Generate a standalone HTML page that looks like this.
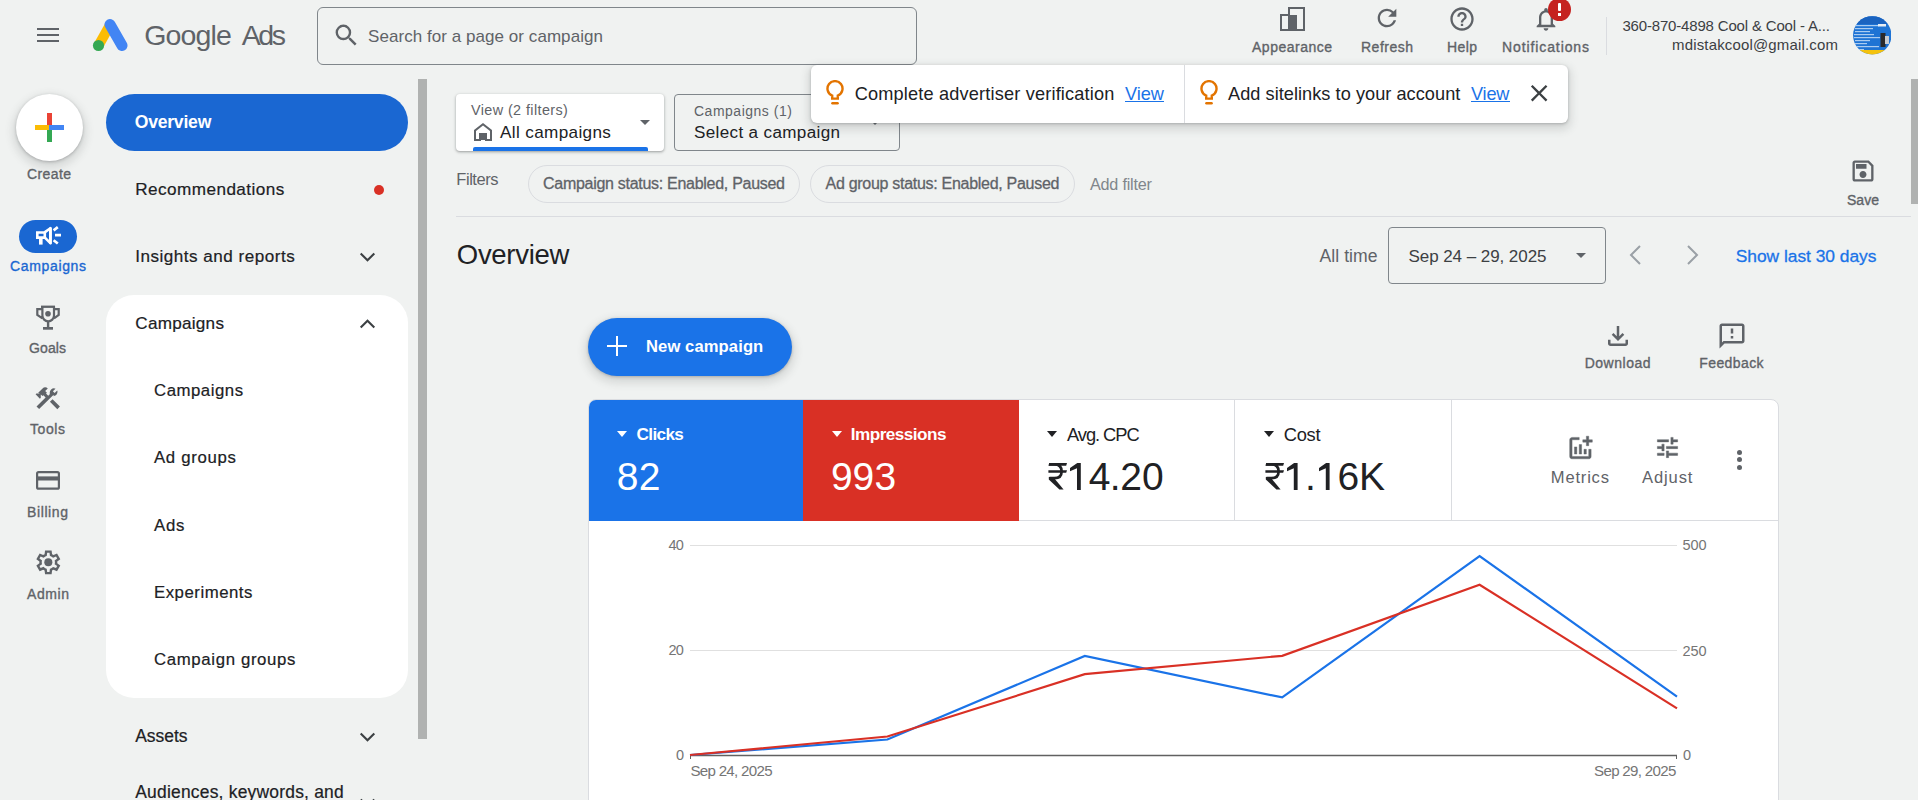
<!DOCTYPE html>
<html><head><meta charset="utf-8">
<style>
*{box-sizing:border-box;margin:0;padding:0}
html,body{width:1918px;height:800px;overflow:hidden;background:#f0f2f1;font-family:"Liberation Sans",sans-serif;color:#202124}
.a{position:absolute;white-space:nowrap;line-height:1}
svg{display:block;position:absolute}
</style></head><body>
<div class="a" style="left:37px;top:28px;width:22px;height:2px;background:#5f6368"></div>
<div class="a" style="left:37px;top:34px;width:22px;height:2px;background:#5f6368"></div>
<div class="a" style="left:37px;top:40px;width:22px;height:2px;background:#5f6368"></div>
<svg style="left:90px;top:17px" width="40" height="38" viewBox="0 0 40 38">
<line x1="8.5" y1="28.5" x2="20" y2="8" stroke="#fbbc04" stroke-width="10"/>
<line x1="20" y1="7.5" x2="32" y2="28.5" stroke="#4285f4" stroke-width="11" stroke-linecap="round"/>
<circle cx="8.5" cy="28.5" r="5.6" fill="#34a853"/></svg>
<div class="a" style="left:144.30px;top:21.00px;font-size:28.50px;letter-spacing:-0.882px;color:#5f6368;">Google</div>
<div class="a" style="left:241.80px;top:21.00px;font-size:28.50px;letter-spacing:-2.446px;color:#5f6368;">Ads</div>
<div class="a" style="left:317px;top:7px;width:600px;height:58px;border:1px solid #80868b;border-radius:6px"></div>
<svg style="left:332.4px;top:21.4px" width="28.8" height="28.8" viewBox="0 0 24 24"><path fill="#5f6368" d="M15.5 14h-.79l-.28-.27A6.47 6.47 0 0 0 16 9.5 6.5 6.5 0 1 0 9.5 16c1.61 0 3.09-.59 4.23-1.57l.27.28v.79l5 4.99L20.49 19l-4.99-5zm-6 0C7.01 14 5 11.99 5 9.5S7.01 5 9.5 5 14 7.01 14 9.5 11.99 14 9.5 14z"/></svg>
<div class="a" style="left:368.00px;top:28.00px;font-size:17.01px;letter-spacing:0.054px;color:#5f6368;">Search for a page or campaign</div>
<svg style="left:1278px;top:5px" width="29" height="27" viewBox="0 0 29 27">
<rect x="11" y="3" width="15" height="22" fill="none" stroke="#5f6368" stroke-width="2"/>
<rect x="3" y="10" width="8" height="15" fill="none" stroke="#5f6368" stroke-width="2"/>
<rect x="10" y="10" width="9" height="15" fill="#5f6368"/></svg>
<div class="a" style="left:1252.00px;top:40.00px;font-size:14.00px;letter-spacing:0.501px;color:#5f6368;-webkit-text-stroke:0.35px #5f6368;">Appearance</div>
<svg style="left:1373px;top:4px" width="28" height="28" viewBox="0 0 24 24"><path fill="#5f6368" d="M17.65 6.35A7.958 7.958 0 0 0 12 4c-4.42 0-7.99 3.58-7.99 8s3.57 8 7.99 8c3.73 0 6.84-2.55 7.73-6h-2.08A5.99 5.99 0 0 1 12 18c-3.31 0-6-2.69-6-6s2.69-6 6-6c1.66 0 3.14.69 4.22 1.78L13 11h7V4l-2.35 2.35z"/></svg>
<div class="a" style="left:1361.00px;top:40.00px;font-size:14.00px;letter-spacing:0.494px;color:#5f6368;-webkit-text-stroke:0.35px #5f6368;">Refresh</div>
<svg style="left:1448px;top:5px" width="28" height="28" viewBox="0 0 24 24"><path fill="#5f6368" d="M11 18h2v-2h-2v2zm1-16C6.48 2 2 6.48 2 12s4.48 10 10 10 10-4.48 10-10S17.52 2 12 2zm0 18c-4.41 0-8-3.59-8-8s3.59-8 8-8 8 3.59 8 8-3.59 8-8 8zm0-14c-2.21 0-4 1.79-4 4h2c0-1.1.9-2 2-2s2 .9 2 2c0 2-3 1.75-3 5h2c0-2.25 3-2.5 3-5 0-2.21-1.79-4-4-4z"/></svg>
<div class="a" style="left:1447.00px;top:40.00px;font-size:14.00px;letter-spacing:0.398px;color:#5f6368;-webkit-text-stroke:0.35px #5f6368;">Help</div>
<svg style="left:1532px;top:5px" width="28" height="28" viewBox="0 0 24 24"><path fill="#5f6368" d="M12 22c1.1 0 2-.9 2-2h-4c0 1.1.89 2 2 2zm6-6v-5c0-3.07-1.64-5.64-4.5-6.32V4c0-.83-.67-1.5-1.5-1.5s-1.5.67-1.5 1.5v.68C7.63 5.36 6 7.92 6 11v5l-2 2v1h16v-1l-2-2zm-2 1H8v-6c0-2.48 1.51-4.5 4-4.5s4 2.02 4 4.5v6z"/></svg>
<div class="a" style="left:1548px;top:-2px;width:23px;height:23px;border-radius:50%;background:#c5221f"></div>
<div class="a" style="left:1557.5px;top:3px;width:3px;height:8px;background:#fff;border-radius:1px"></div>
<div class="a" style="left:1557.5px;top:13px;width:3px;height:3px;background:#fff"></div>
<div class="a" style="left:1502.00px;top:40.00px;font-size:14.00px;letter-spacing:0.895px;color:#5f6368;-webkit-text-stroke:0.35px #5f6368;">Notifications</div>
<div class="a" style="left:1606px;top:17px;width:1px;height:38px;background:#dadce0"></div>
<div class="a" style="left:1622.40px;top:19.00px;font-size:14.97px;letter-spacing:-0.154px;color:#3c4043;">360-870-4898 Cool &amp; Cool - A...</div>
<div class="a" style="left:1672.00px;top:38.00px;font-size:14.97px;letter-spacing:0.176px;color:#3c4043;">mdistakcool@gmail.com</div>
<svg style="left:1852.7px;top:16.2px" width="38.5" height="38.7" viewBox="0 0 38.5 38.7"><defs><clipPath id="av"><circle cx="19.25" cy="19.35" r="19.2"/></clipPath></defs><g clip-path="url(#av)"><rect width="38.5" height="38.7" fill="#1f74d4"/><rect x="0" y="0" width="38.5" height="8" fill="#1a63c0"/><g fill="#cfe3f7" opacity="0.8"><rect x="2" y="9" width="24" height="1.2"/><rect x="2" y="12" width="18" height="1.2"/><rect x="2" y="15" width="15" height="1.2"/><rect x="1" y="18" width="20" height="1.2"/><rect x="1" y="21" width="26" height="1.2"/><rect x="2" y="24" width="15" height="1.2"/><rect x="2" y="27" width="12" height="1.2"/><rect x="2" y="30" width="24" height="1.2"/><rect x="3" y="33" width="8" height="1.2"/></g><rect x="25" y="8" width="8" height="2.5" fill="#e8eef4"/><rect x="27.5" y="17" width="5" height="14" fill="#2a2a2a"/><rect x="32" y="20" width="4" height="8" fill="#c8ccd0"/><rect x="0" y="34" width="38.5" height="5" fill="#f4c20d"/></g></svg>
<div class="a" style="left:16px;top:94px;width:67px;height:67px;border-radius:50%;background:#fff;box-shadow:0 1px 3px rgba(60,64,67,.3),0 4px 8px 3px rgba(60,64,67,.15)"></div>
<div class="a" style="left:47px;top:113px;width:5px;height:14px;background:#ea4335"></div>
<div class="a" style="left:35px;top:125px;width:14px;height:5px;background:#fbbc04"></div>
<div class="a" style="left:49px;top:125px;width:15px;height:5px;background:#4285f4"></div>
<div class="a" style="left:47px;top:130px;width:5px;height:12px;background:#34a853"></div>
<div class="a" style="left:27.00px;top:167.00px;font-size:14.00px;letter-spacing:0.393px;color:#5f6368;-webkit-text-stroke:0.35px #5f6368;">Create</div>
<div class="a" style="left:19px;top:220px;width:58px;height:33px;border-radius:17px;background:#1a67d2"></div>
<svg style="left:36px;top:226px" width="26" height="20" viewBox="0 0 26 20"><path d="M1.3 6.5H8.8V11.6H1.3Z" fill="none" stroke="#fff" stroke-width="2.6"/><rect x="3" y="11" width="3.6" height="7.6" fill="#fff"/><path d="M8.6 6.4L14.4 2.2V17.2L8.6 11.4" fill="none" stroke="#fff" stroke-width="2.6" stroke-linejoin="round"/><rect x="13" y="1.2" width="2.8" height="17" rx="1.2" fill="#fff"/><path d="M17.6 4.3L21.8 1.2M19 9.1H25M17.6 14.2L21.8 17.5" stroke="#fff" stroke-width="2.7"/></svg>
<div class="a" style="left:10.00px;top:259.00px;font-size:14.00px;letter-spacing:0.649px;color:#1a67d2;-webkit-text-stroke:0.35px #1a67d2;">Campaigns</div>
<svg style="left:36px;top:305px" width="24" height="25" viewBox="0 0 24 25"><rect x="5" y="0.6" width="14" height="2.3" fill="#5f6368"/><path d="M6.4 1.5V10.5A5.8 5.8 0 0 0 18 10.5V1.5M6.4 4.1H1.3V10L6.4 13.3M18 4.1H22.7V10L18 13.3" fill="none" stroke="#5f6368" stroke-width="2.2"/><rect x="10.9" y="16" width="2.4" height="6.5" fill="#5f6368"/><rect x="7" y="22" width="10" height="2.7" fill="#5f6368"/><circle cx="12" cy="8.7" r="2.8" fill="#5f6368"/></svg>
<div class="a" style="left:29.00px;top:341.00px;font-size:14.00px;letter-spacing:0.106px;color:#5f6368;-webkit-text-stroke:0.35px #5f6368;">Goals</div>
<svg style="left:32.8px;top:382.8px" width="29.5" height="29.5" viewBox="0 0 24 24"><path fill="#5f6368" d="M13.78 15.3l6 6 2.11-2.16-6-6-2.11 2.16zm3.72-5.2c-.39 0-.81-.05-1.14-.19L4.97 21.25l-2.11-2.11 7.41-7.4L8.5 9.96l-.72.71-1.45-1.41v2.82l-.7.71-3.52-3.54.71-.71h2.8L4.23 7.95l3.56-3.56c1.17-1.17 3.07-1.17 4.24 0L9.91 6.51l1.41 1.41-.71.71 1.78 1.78 1.41-1.41c-.14-.33-.2-.75-.2-1.14a3.49 3.49 0 0 1 3.9-3.48c.3.03.55.1.8.21l-2.12 2.12 1.41 1.41 2.12-2.12c.11.25.17.52.21.8a3.49 3.49 0 0 1-3.48 3.9z"/></svg>
<div class="a" style="left:30.00px;top:422.00px;font-size:14.00px;letter-spacing:0.577px;color:#5f6368;-webkit-text-stroke:0.35px #5f6368;">Tools</div>
<svg style="left:36px;top:471px" width="25" height="20" viewBox="0 0 25 20"><rect x="1.1" y="1.1" width="21.8" height="16.6" rx="1.5" fill="none" stroke="#5f6368" stroke-width="2.2"/><rect x="1" y="5.4" width="22" height="4.1" fill="#5f6368"/></svg>
<div class="a" style="left:27.00px;top:505.00px;font-size:14.00px;letter-spacing:0.609px;color:#5f6368;-webkit-text-stroke:0.35px #5f6368;">Billing</div>
<svg style="left:33.8px;top:547.6px" width="28.66" height="28.66" viewBox="0 -960 960 960"><path fill="#5f6368" d="m370-80-16-128q-13-5-24.5-12T307-235l-119 50L78-375l103-78q-1-7-1-13.5v-27q0-6.5 1-13.5L78-585l110-190 119 50q11-8 23-15t24-12l16-128h220l16 128q13 5 24.5 12t22.5 15l119-50 110 190-103 78q1 7 1 13.5v27q0 6.5-2 13.5l103 78-110 190-118-50q-11 8-23 15t-24 12L590-80H370Zm70-80h79l14-106q31-8 57.5-23.5T639-327l99 41 39-68-86-65q5-14 7-29.5t2-31.5q0-16-2-31.5t-7-29.5l86-65-39-68-99 42q-22-23-48.5-38.5T533-694l-13-106h-79l-14 106q-31 8-57.5 23.5T321-633l-99-41-39 68 86 64q-5 15-7 30t-2 32q0 16 2 31t7 30l-86 65 39 68 99-42q22 23 48.5 38.5T427-266l13 106Z"/><circle cx="480" cy="-480" r="135" fill="#5f6368"/></svg>
<div class="a" style="left:27.00px;top:587.00px;font-size:14.00px;letter-spacing:0.577px;color:#5f6368;-webkit-text-stroke:0.35px #5f6368;">Admin</div>
<div class="a" style="left:106px;top:94px;width:302px;height:57px;border-radius:28.5px;background:#1a67d2"></div>
<div class="a" style="left:134.70px;top:114.00px;font-size:17.59px;letter-spacing:-0.223px;color:#fff;font-weight:bold;">Overview</div>
<div class="a" style="left:135.25px;top:181.00px;font-size:17.15px;letter-spacing:0.439px;color:#202124;-webkit-text-stroke:0.2px #202124;">Recommendations</div>
<div class="a" style="left:374px;top:185px;width:10px;height:10px;border-radius:50%;background:#d93025"></div>
<div class="a" style="left:135.25px;top:248.00px;font-size:17.08px;letter-spacing:0.500px;color:#202124;-webkit-text-stroke:0.2px #202124;">Insights and reports</div>
<svg style="left:358.5px;top:252px" width="18" height="12" viewBox="0 0 18 12"><path fill="none" stroke="#3c4043" stroke-width="2.1" d="M1.7 1.5L8.5 8.3L15.3 1.5"/></svg>
<div class="a" style="left:106px;top:295px;width:302px;height:403px;border-radius:28px;background:#fff"></div>
<div class="a" style="left:135.25px;top:315.00px;font-size:17.15px;letter-spacing:0.251px;color:#202124;-webkit-text-stroke:0.2px #202124;">Campaigns</div>
<svg style="left:358.5px;top:319px" width="18" height="12" viewBox="0 0 18 12"><path fill="none" stroke="#3c4043" stroke-width="2.1" d="M1.7 8.5L8.5 1.7L15.3 8.5"/></svg>
<div class="a" style="left:154.00px;top:383.00px;font-size:16.80px;letter-spacing:0.517px;color:#202124;-webkit-text-stroke:0.2px #202124;">Campaigns</div>
<div class="a" style="left:154.00px;top:450.00px;font-size:16.80px;letter-spacing:0.679px;color:#202124;-webkit-text-stroke:0.2px #202124;">Ad groups</div>
<div class="a" style="left:154.00px;top:518.00px;font-size:16.80px;letter-spacing:0.781px;color:#202124;-webkit-text-stroke:0.2px #202124;">Ads</div>
<div class="a" style="left:154.00px;top:585.00px;font-size:16.80px;letter-spacing:0.513px;color:#202124;-webkit-text-stroke:0.2px #202124;">Experiments</div>
<div class="a" style="left:154.00px;top:652.00px;font-size:16.80px;letter-spacing:0.640px;color:#202124;-webkit-text-stroke:0.2px #202124;">Campaign groups</div>
<div class="a" style="left:135.25px;top:728.00px;font-size:17.44px;letter-spacing:-0.015px;color:#202124;-webkit-text-stroke:0.2px #202124;">Assets</div>
<svg style="left:358.5px;top:732px" width="18" height="12" viewBox="0 0 18 12"><path fill="none" stroke="#3c4043" stroke-width="2.1" d="M1.7 1.5L8.5 8.3L15.3 1.5"/></svg>
<div class="a" style="left:135.25px;top:784.00px;font-size:17.44px;letter-spacing:0.213px;color:#202124;-webkit-text-stroke:0.2px #202124;">Audiences, keywords, and</div>
<svg style="left:358.5px;top:798px" width="18" height="12" viewBox="0 0 18 12"><path fill="none" stroke="#3c4043" stroke-width="2.1" d="M1.7 1.5L8.5 8.3L15.3 1.5"/></svg>
<div class="a" style="left:418px;top:79px;width:9px;height:660px;background:#b0b2b1"></div>
<div class="a" style="left:456px;top:94px;width:208px;height:57px;border-radius:4px;background:#fff;box-shadow:0 1px 2px rgba(60,64,67,.3),0 1px 3px 1px rgba(60,64,67,.15)"></div>
<div class="a" style="left:471.00px;top:103.00px;font-size:14.39px;letter-spacing:0.406px;color:#5f6368;">View (2 filters)</div>
<svg style="left:471px;top:120px" width="24" height="24" viewBox="0 0 24 24"><path fill="#5f6368" d="M12 3L3 10v11h7v-6h4v6h7V10z"/><path fill="#fff" d="M12 5.5l7 5.4V19h-3v-6H8v6H5v-8.1z"/><rect x="9.5" y="15" width="5" height="5" fill="#5f6368"/></svg>
<div class="a" style="left:500.00px;top:124.00px;font-size:17.15px;letter-spacing:0.353px;color:#202124;">All campaigns</div>
<svg style="left:633px;top:110px" width="24" height="24" viewBox="0 0 24 24"><path fill="#5f6368" d="M7 10l5 5 5-5z"/></svg>
<div class="a" style="left:473px;top:147px;width:175px;height:4px;border-radius:2px 2px 0 0;background:#1a73e8"></div>
<div class="a" style="left:674px;top:94px;width:226px;height:57px;border-radius:4px;border:1px solid #80868b"></div>
<div class="a" style="left:694.00px;top:105.00px;font-size:13.95px;letter-spacing:0.542px;color:#5f6368;">Campaigns (1)</div>
<div class="a" style="left:694.00px;top:124.00px;font-size:17.08px;letter-spacing:0.343px;color:#202124;">Select a campaign</div>
<div class="a" style="left:869px;top:119px;width:0;height:0;border-left:6px solid transparent;border-right:6px solid transparent;border-top:6px solid #5f6368"></div>
<div class="a" style="left:811px;top:65px;width:757px;height:58px;border-radius:6px;background:#fff;box-shadow:0 1px 3px rgba(60,64,67,.3),0 4px 8px 3px rgba(60,64,67,.15)"></div>
<svg style="left:823.2px;top:80px" width="24" height="26" viewBox="0 0 24 26"><path fill="none" stroke="#e37400" stroke-width="2.4" d="M9.2 18.6V15.6A7.5 7.5 0 1 1 14.8 15.6V18.6Z"/><rect x="8.2" y="22" width="7.6" height="2.5" rx="1.2" fill="#e37400"/></svg>
<div class="a" style="left:854.70px;top:85.00px;font-size:18.17px;letter-spacing:0.174px;color:#202124;">Complete advertiser verification</div>
<div class="a" style="left:1125.00px;top:85.00px;font-size:18.17px;letter-spacing:-0.036px;color:#1a73e8;">View</div>
<div class="a" style="left:1125px;top:101px;width:39px;height:1px;background:#1a73e8"></div>
<div class="a" style="left:1184px;top:65px;width:1px;height:58px;background:#dadce0"></div>
<svg style="left:1196.7px;top:80px" width="24" height="26" viewBox="0 0 24 26"><path fill="none" stroke="#e37400" stroke-width="2.4" d="M9.2 18.6V15.6A7.5 7.5 0 1 1 14.8 15.6V18.6Z"/><rect x="8.2" y="22" width="7.6" height="2.5" rx="1.2" fill="#e37400"/></svg>
<div class="a" style="left:1228.00px;top:85.00px;font-size:18.17px;letter-spacing:0.043px;color:#202124;">Add sitelinks to your account</div>
<div class="a" style="left:1471.00px;top:85.00px;font-size:18.17px;letter-spacing:-0.203px;color:#1a73e8;">View</div>
<div class="a" style="left:1471px;top:101px;width:39px;height:1px;background:#1a73e8"></div>
<svg style="left:1525px;top:79px" width="28.3" height="28.3" viewBox="0 0 24 24"><path fill="#3c4043" d="M19 6.41L17.59 5 12 10.59 6.41 5 5 6.41 10.59 12 5 17.59 6.41 19 12 13.41 17.59 19 19 17.59 13.41 12z"/></svg>
<div class="a" style="left:456.30px;top:171.00px;font-size:16.50px;letter-spacing:-0.454px;color:#5f6368;">Filters</div>
<div class="a" style="left:528px;top:165px;width:272px;height:38px;border-radius:19px;border:1px solid #dadce0"></div>
<div class="a" style="left:543.00px;top:176.00px;font-size:16.00px;letter-spacing:-0.285px;color:#5f6368;-webkit-text-stroke:0.3px #5f6368;">Campaign status: Enabled, Paused</div>
<div class="a" style="left:810px;top:165px;width:265px;height:38px;border-radius:19px;border:1px solid #dadce0"></div>
<div class="a" style="left:825.50px;top:176.00px;font-size:16.00px;letter-spacing:-0.288px;color:#5f6368;-webkit-text-stroke:0.3px #5f6368;">Ad group status: Enabled, Paused</div>
<div class="a" style="left:1090.00px;top:176.00px;font-size:16.20px;letter-spacing:-0.217px;color:#80868b;">Add filter</div>
<svg style="left:1849px;top:157px" width="28" height="28" viewBox="0 0 24 24"><path fill="#5f6368" d="M17 3H5c-1.11 0-2 .9-2 2v14c0 1.1.89 2 2 2h14c1.1 0 2-.9 2-2V7l-4-4zm2 16H5V5h11.17L19 7.83V19zm-7-7c-1.66 0-3 1.34-3 3s1.34 3 3 3 3-1.34 3-3-1.34-3-3-3zM6 6h9v4H6z"/></svg>
<div class="a" style="left:1847.00px;top:193.00px;font-size:14.00px;letter-spacing:0.027px;color:#5f6368;-webkit-text-stroke:0.35px #5f6368;">Save</div>
<div class="a" style="left:456px;top:216px;width:1455px;height:1px;background:#dadce0"></div>
<div class="a" style="left:1911px;top:79px;width:7px;height:125px;background:#b0b2b1"></div>
<div class="a" style="left:456.80px;top:241.00px;font-size:27.50px;letter-spacing:-0.296px;color:#202124;">Overview</div>
<div class="a" style="left:1319.40px;top:248.00px;font-size:17.60px;letter-spacing:0.074px;color:#5f6368;">All time</div>
<div class="a" style="left:1388px;top:227px;width:218px;height:57px;border-radius:4px;border:1px solid #80868b"></div>
<div class="a" style="left:1408.50px;top:248.00px;font-size:17.00px;letter-spacing:-0.061px;color:#3c4043;">Sep 24 – 29, 2025</div>
<svg style="left:1569px;top:243px" width="24" height="24" viewBox="0 0 24 24"><path fill="#5f6368" d="M7 10l5 5 5-5z"/></svg>
<svg style="left:1626px;top:244px" width="18" height="22" viewBox="0 0 18 22"><path fill="none" stroke="#9aa0a6" stroke-width="2" d="M14 2L5 11L14 20"/></svg>
<svg style="left:1684px;top:244px" width="18" height="22" viewBox="0 0 18 22"><path fill="none" stroke="#9aa0a6" stroke-width="2" d="M4 2L13 11L4 20"/></svg>
<div class="a" style="left:1735.70px;top:248.00px;font-size:17.40px;letter-spacing:-0.025px;color:#1a73e8;-webkit-text-stroke:0.3px #1a73e8;">Show last 30 days</div>
<div class="a" style="left:588px;top:318px;width:204px;height:58px;border-radius:29px;background:#1a73e8;box-shadow:0 1px 3px rgba(60,64,67,.3),0 4px 8px 3px rgba(60,64,67,.15)"></div>
<div class="a" style="left:607px;top:344.75px;width:20px;height:2.5px;background:#fff"></div>
<div class="a" style="left:615.75px;top:336px;width:2.5px;height:20px;background:#fff"></div>
<div class="a" style="left:646.00px;top:339.00px;font-size:16.60px;letter-spacing:0.096px;color:#fff;font-weight:bold;">New campaign</div>
<svg style="left:1603px;top:321px" width="30" height="30" viewBox="0 -960 960 960"><path fill="#5f6368" d="M480-320 280-520l56-58 104 104v-326h80v326l104-104 56 58-200 200ZM240-160q-33 0-56.5-23.5T160-240v-120h80v120h480v-120h80v120q0 33-23.5 56.5T720-160H240Z"/></svg>
<div class="a" style="left:1584.70px;top:356.00px;font-size:14.00px;letter-spacing:0.519px;color:#5f6368;-webkit-text-stroke:0.35px #5f6368;">Download</div>
<svg style="left:1717px;top:321px" width="30" height="30" viewBox="0 0 24 24"><path fill="#5f6368" d="M20 2H4c-1.1 0-1.99.9-1.99 2L2 22l4-4h14c1.1 0 2-.9 2-2V4c0-1.1-.9-2-2-2zm0 14H5.17l-.59.59-.58.58V4h16v12zm-9-4h2v2h-2zm0-6h2v4h-2z"/></svg>
<div class="a" style="left:1699.30px;top:356.00px;font-size:14.00px;letter-spacing:0.396px;color:#5f6368;-webkit-text-stroke:0.35px #5f6368;">Feedback</div>
<div class="a" style="left:588px;top:399px;width:1191px;height:420px;border-radius:8px 8px 0 0;background:#fff;border:1px solid #dadce0"></div>
<div class="a" style="left:589px;top:400px;width:214px;height:121px;border-radius:7px 0 0 0;background:#1a73e8"></div>
<div class="a" style="left:803px;top:400px;width:216px;height:121px;background:#d93025"></div>
<div class="a" style="left:1234px;top:400px;width:1px;height:121px;background:#dadce0"></div>
<div class="a" style="left:1451px;top:400px;width:1px;height:121px;background:#dadce0"></div>
<div class="a" style="left:1019px;top:520px;width:759px;height:1px;background:#dadce0"></div>
<div class="a" style="left:616.8px;top:431px;width:0;height:0;border-left:5.7px solid transparent;border-right:5.7px solid transparent;border-top:6px solid #fff"></div>
<div class="a" style="left:636.60px;top:426.00px;font-size:17.15px;letter-spacing:-0.651px;color:#fff;font-weight:bold;">Clicks</div>
<div class="a" style="left:616.80px;top:457px;font-size:39.00px;color:#fff;">8</div>
<div class="a" style="left:638.68px;top:457px;font-size:39.00px;color:#fff;">2</div>
<div class="a" style="left:831.5px;top:431px;width:0;height:0;border-left:5.7px solid transparent;border-right:5.7px solid transparent;border-top:6px solid #fff"></div>
<div class="a" style="left:850.80px;top:426.00px;font-size:17.15px;letter-spacing:-0.536px;color:#fff;font-weight:bold;">Impressions</div>
<div class="a" style="left:830.93px;top:457px;font-size:39.00px;color:#fff;">9</div>
<div class="a" style="left:852.43px;top:457px;font-size:39.00px;color:#fff;">9</div>
<div class="a" style="left:874.43px;top:457px;font-size:39.00px;color:#fff;">3</div>
<div class="a" style="left:1047px;top:431px;width:0;height:0;border-left:5.7px solid transparent;border-right:5.7px solid transparent;border-top:6px solid #202124"></div>
<div class="a" style="left:1067.00px;top:426.00px;font-size:18.31px;letter-spacing:-1.054px;color:#202124;">Avg. CPC</div>
<div class="a" style="left:1263.8px;top:431px;width:0;height:0;border-left:5.7px solid transparent;border-right:5.7px solid transparent;border-top:6px solid #202124"></div>
<div class="a" style="left:1283.80px;top:426.00px;font-size:18.31px;letter-spacing:-0.312px;color:#202124;">Cost</div>
<svg style="left:1047.5px;top:462px" width="20" height="29" viewBox="0 0 20 29"><path fill="#202124" d="M1.2 1H19L18.2 3.75H0.4Z M0.4 8.25H19L18.2 10.75H0.4Z"/><path fill="none" stroke="#202124" stroke-width="2.7" d="M1 2.4H6.5C11 2.4 13.6 5 13.6 9.5C13.6 13.8 11 16.2 6.5 16.2H1.5"/><path fill="#202124" d="M0.8 15H5.2L15.6 27.5H11.4L0.8 17.5Z"/></svg>
<svg style="left:1070.20px;top:463.00px" width="11.80" height="27.00" viewBox="0 0 11.80 27.00"><path fill="#202124" d="M7.00 27.00V5.2L0 8.3V4.9L7.30 0H10.80V27.00Z"/></svg>
<div class="a" style="left:1088.63px;top:457px;font-size:39.00px;color:#202124;">4</div>
<div class="a" style="left:1109.64px;top:457px;font-size:39.00px;color:#202124;">.</div>
<div class="a" style="left:1120.13px;top:457px;font-size:39.00px;color:#202124;">2</div>
<div class="a" style="left:1141.88px;top:457px;font-size:39.00px;color:#202124;">0</div>
<svg style="left:1264.8px;top:462px" width="20" height="29" viewBox="0 0 20 29"><path fill="#202124" d="M1.2 1H19L18.2 3.75H0.4Z M0.4 8.25H19L18.2 10.75H0.4Z"/><path fill="none" stroke="#202124" stroke-width="2.7" d="M1 2.4H6.5C11 2.4 13.6 5 13.6 9.5C13.6 13.8 11 16.2 6.5 16.2H1.5"/><path fill="#202124" d="M0.8 15H5.2L15.6 27.5H11.4L0.8 17.5Z"/></svg>
<svg style="left:1287.10px;top:463.00px" width="11.60" height="27.00" viewBox="0 0 11.60 27.00"><path fill="#202124" d="M6.80 27.00V5.2L0 8.3V4.9L7.10 0H10.60V27.00Z"/></svg>
<div class="a" style="left:1305.09px;top:457px;font-size:39.00px;color:#202124;">.</div>
<svg style="left:1318.90px;top:463.00px" width="11.60" height="27.00" viewBox="0 0 11.60 27.00"><path fill="#202124" d="M6.80 27.00V5.2L0 8.3V4.9L7.10 0H10.60V27.00Z"/></svg>
<div class="a" style="left:1337.53px;top:457px;font-size:39.00px;color:#202124;">6</div>
<div class="a" style="left:1358.98px;top:457px;font-size:39.00px;color:#202124;">K</div>
<svg style="left:1567px;top:435px" width="28" height="25" viewBox="2 1 21 21"><path fill="#5f6368" stroke="#5f6368" stroke-width="0.35" d="M22 5v2h-3v3h-2V7h-3V5h3V2h2v3h3zm-3 14H5V5h6V3H5c-1.1 0-2 .9-2 2v14c0 1.1.9 2 2 2h14c1.1 0 2-.9 2-2v-6h-2v6zm-4-6v4h2v-4h-2zm-4 4h2V9h-2v8zm-2 0v-6H7v6h2z"/></svg>
<div class="a" style="left:1550.80px;top:470.00px;font-size:16.57px;letter-spacing:0.801px;color:#5f6368;">Metrics</div>
<svg style="left:1653.5px;top:433.5px" width="27" height="27" viewBox="0 0 24 24"><path fill="#5f6368" stroke="#5f6368" stroke-width="0.4" d="M3 17v2h6v-2H3zM3 5v2h10V5H3zm10 16v-2h8v-2h-8v-2h-2v6h2zM7 9v2H3v2h4v2h2V9H7zm14 4v-2H11v2h10zm-6-4h2V7h4V5h-4V3h-2v6z"/></svg>
<div class="a" style="left:1642.00px;top:470.00px;font-size:16.57px;letter-spacing:0.887px;color:#5f6368;">Adjust</div>
<div class="a" style="left:1737px;top:449.5px;width:5px;height:5px;border-radius:50%;background:#5f6368"></div>
<div class="a" style="left:1737px;top:457.0px;width:5px;height:5px;border-radius:50%;background:#5f6368"></div>
<div class="a" style="left:1737px;top:464.5px;width:5px;height:5px;border-radius:50%;background:#5f6368"></div>
<svg style="left:0;top:0" width="1918" height="800">
<line x1="690" y1="545.5" x2="1677" y2="545.5" stroke="#e0e0e0" stroke-width="1"/>
<line x1="690" y1="650.5" x2="1677" y2="650.5" stroke="#e0e0e0" stroke-width="1"/>
<line x1="690" y1="755.5" x2="1677" y2="755.5" stroke="#616161" stroke-width="1.5"/>
<line x1="690.5" y1="755" x2="690.5" y2="759" stroke="#616161" stroke-width="1"/>
<line x1="1676.5" y1="755" x2="1676.5" y2="759" stroke="#616161" stroke-width="1"/>
<polyline points="690.0,755.0 887.4,739.5 1084.8,656.0 1282.2,697.4 1479.6,556.0 1677.0,696.7" fill="none" stroke="#1a73e8" stroke-width="2.2" stroke-linejoin="miter"/>
<polyline points="690.0,755.0 887.4,736.5 1084.8,674.2 1282.2,655.8 1479.6,584.7 1677.0,708.4" fill="none" stroke="#d93025" stroke-width="2.2" stroke-linejoin="miter"/>
</svg>
<div class="a" style="left:668.60px;top:538.00px;font-size:14.53px;letter-spacing:-0.870px;color:#757575;">40</div>
<div class="a" style="left:668.60px;top:643.00px;font-size:14.53px;letter-spacing:-0.870px;color:#757575;">20</div>
<div class="a" style="left:676.00px;top:748.00px;font-size:14.53px;letter-spacing:0.000px;color:#757575;">0</div>
<div class="a" style="left:1682.60px;top:538.00px;font-size:14.53px;letter-spacing:-0.118px;color:#757575;">500</div>
<div class="a" style="left:1682.60px;top:644.00px;font-size:14.53px;letter-spacing:-0.118px;color:#757575;">250</div>
<div class="a" style="left:1683.00px;top:748.00px;font-size:14.53px;letter-spacing:0.000px;color:#757575;">0</div>
<div class="a" style="left:690.40px;top:763.00px;font-size:15.12px;letter-spacing:-0.704px;color:#757575;">Sep 24, 2025</div>
<div class="a" style="left:1594.00px;top:763.00px;font-size:15.12px;letter-spacing:-0.677px;color:#757575;">Sep 29, 2025</div>
</body></html>
